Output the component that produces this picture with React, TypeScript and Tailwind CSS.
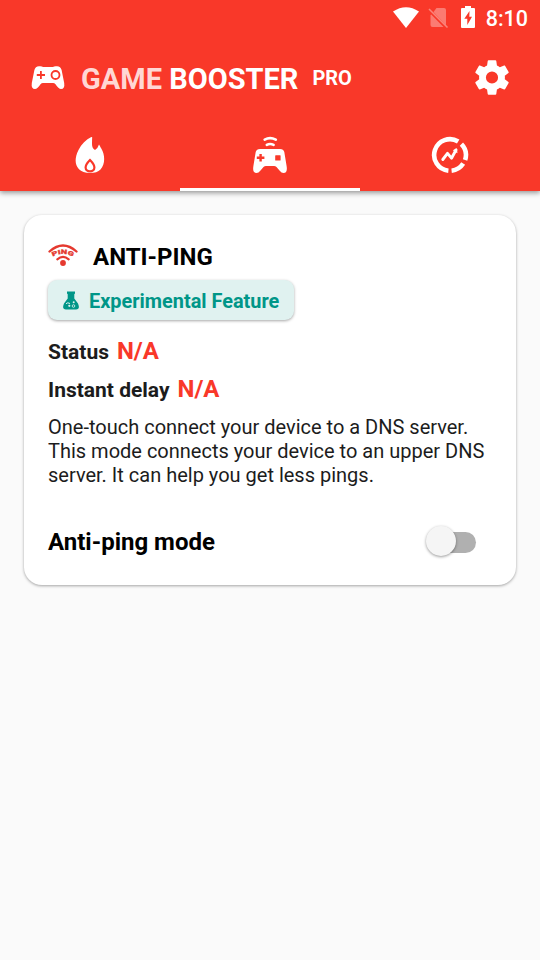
import type { ReactNode } from "react";

function StatusBar() {
  return (
    <div className="flex h-9 items-center justify-end pr-3">
      {/* wifi */}
      <svg className="mr-[8px] h-[22px] w-[28px]" viewBox="0 0 28 22" fill="#fff">
        <path d="M1 4.6Q14-4 27 4.6L14 21Z" />
      </svg>
      {/* no sim */}
      <svg className="mr-3 h-[22px] w-[21px]" viewBox="0 0 21 22">
        <path d="M8.5 1H16q2 0 2 2v15L5.5 5ZM3.2 7.5 15.5 20H4.5Q2.500 20 2.500 18V8Z" fill="#fff" opacity=".34" />
        <path d="M1 2 19.500 20.500" stroke="#fff" strokeWidth="1.600" opacity=".38" />
      </svg>
      {/* battery */}
      <svg className="mr-[11px] h-[22px] w-[14px] -translate-y-px" viewBox="0 0 14 22">
        <path d="M4 0H10V2H13Q14 2 14 3V21Q14 22 13 22H1Q0 22 0 21V3Q0 2 1 2H4Z" fill="#fff" />
        <path d="M8.500 5 3.300 12.800H6.300V19L11 10.800H8.300Z" fill="#f93829" />
      </svg>
      <span className="pt-[2px] text-[21.500px] font-medium leading-none text-white">8:10</span>
    </div>
  );
}

function GamepadIcon() {
  return (
    <svg className="h-[24px] w-[34px]" viewBox="0 0 34 24">
      <path
        d="M8 .3Q11 0 12 1H22Q23 0 26 .3Q29.700 .5 30.600 4L33.200 17Q34 23 30 23Q27.500 23 24.500 18.300Q23.500 17 22 17H12Q10.500 17 9.500 18.300Q6.500 23 4 23Q0 23 .8 17L3.400 4Q4.300 .5 8 .3Z"
        fill="#fff"
      />
      <path d="M5.800 9H14M9.900 5V13" stroke="#f93829" strokeWidth="1.800" />
      <circle cx="24.500" cy="9" r="4" fill="none" stroke="#f93829" strokeWidth="1.800" />
    </svg>
  );
}

function GearIcon() {
  return (
    <svg className="h-[43px] w-[43px] -translate-x-[0.5px]" viewBox="0 0 24 24" fill="#fff">
      <path d="M19.140 12.940c.04-.3.060-.61.060-.940 0-.32-.02-.640-.070-.940l2.030-1.580c.18-.14.230-.410.120-.610l-1.920-3.320c-.12-.22-.370-.290-.590-.220l-2.390.960c-.5-.380-1.030-.7-1.620-.940L14.400 2.810c-.04-.240-.240-.410-.480-.410h-3.840c-.240 0-.430.170-.470.410L9.250 5.350c-.59.240-1.130.570-1.620.940L5.240 5.330c-.22-.080-.470 0-.590.220L2.740 8.870c-.12.210-.080.470.120.610l2.030 1.580c-.05.3-.090.630-.090.940s.02.640.070.940l-2.030 1.580c-.18.140-.230.410-.120.610l1.920 3.320c.120.220.370.290.590.220l2.390-.960c.5.380 1.030.7 1.620.940l.360 2.540c.05.240.240.410.480.410h3.840c.240 0 .440-.170.470-.410l.360-2.540c.59-.240 1.130-.560 1.620-.940l2.390.960c.220.080.470 0 .590-.220l1.920-3.320c.120-.220.070-.470-.120-.610l-2.010-1.580zM12 15.400a3.400 3.400 0 1 1 0-6.800 3.400 3.400 0 0 1 0 6.800z" />
    </svg>
  );
}

function FlameIcon() {
  return (
    <svg className="h-[38px] w-[30px]" viewBox="0 0 30 38">
      <path
        d="M16.300 1C11 3.500 6.500 8 3.500 14C-.5 22 -.3 29 4 33.300Q7.500 37 15 37Q22 37 25.500 33.500C30.300 28.500 30.200 19 26.300 12.500C25.500 11 24.500 9.500 24 8.500Q23 12 20 14Q17 12.500 17 8Q17 4 17.200 1.300Z"
        fill="#fff"
      />
      <path
        d="M15 24C12.500 26.500 10.600 28.700 10.600 31.500C10.600 36.600 19.400 36.600 19.400 31.500C19.400 28.700 17.500 26.500 15 24Z"
        fill="#fff"
        stroke="#f93829"
        strokeWidth="2.200"
      />
    </svg>
  );
}

function RemoteIcon() {
  return (
    <svg className="h-[38px] w-[36px]" viewBox="0 0 36 38">
      <path
        d="M8 13H28Q31.500 13 32.300 16L34.600 30Q35.800 37 31.500 37Q29.500 37 27.500 34.500L24.500 31Q23.500 30 22 30H14Q12.500 30 11.500 31L8.500 34.500Q6.500 37 4.500 37Q.2 37 1.400 30L3.700 16Q4.500 13 8 13Z"
        fill="#fff"
      />
      <path d="M4.800 21.800H12.400M8.600 18V25.600" stroke="#f93829" strokeWidth="2.400" />
      <rect x="23.200" y="19.200" width="5.400" height="5.400" rx=".6" fill="#f93829" />
      <g fill="none" stroke="#fff" strokeWidth="2.600" strokeLinecap="round">
        <path d="M12.700 3.600Q18 .7 23.800 3.600" />
        <path d="M14.800 8.900Q18 7.100 21.600 8.900" />
      </g>
    </svg>
  );
}

function MeterIcon() {
  return (
    <svg className="h-[38px] w-[38px]" viewBox="0 0 38 38" fill="none" stroke="#fff">
      <path d="M17.400 34.700A15.800 15.800 0 1 1 27.200 5.500" strokeWidth="4.600" />
      <path d="M30.400 8.100A15.800 15.800 0 0 1 34.100 24M32.200 27.600A15.800 15.800 0 0 1 20.600 34.700" strokeWidth="4.600" />
      <path d="M11.800 23.500 16.500 17.300 20.500 22.200 25 14" strokeWidth="2.900" strokeLinecap="round" strokeLinejoin="round" />
      <path d="m21.800 14.300 4.200-2 .4 5Z" fill="#fff" stroke="none" />
    </svg>
  );
}

function PingIcon() {
  return (
    <svg className="h-[24px] w-[30px] -translate-y-px" viewBox="0 0 30 24" fill="none" stroke="#e5392f">
      <path d="M1.500 7.500Q15-4.400 28.500 7.500" strokeWidth="2.300" strokeLinecap="round" />
      <path id="ping-arc" d="M4.800 12.800Q15 7 25.200 12.800" stroke="none" />
      <text className="font-['Roboto'] text-[6px] font-black" fill="#e5392f" stroke="#e5392f" strokeWidth=".3">
        <textPath href="#ping-arc" textLength="21" lengthAdjust="spacingAndGlyphs">
          PING
        </textPath>
      </text>
      <path d="M9.300 15.400Q15 10.400 20.700 15.400" strokeWidth="2.100" strokeLinecap="round" />
      <circle cx="15" cy="19" r="2.900" fill="#e5392f" stroke="none" />
    </svg>
  );
}

function FlaskIcon() {
  return (
    <svg className="h-[19px] w-[16px]" viewBox="0 0 16 19">
      <path
        d="M4 .5H12V2.500L11.300 3.300V7.500L15 12.500Q17.500 18.500 13 18.500H3Q-1.500 18.500 1 12.500L4.700 7.500V3.300L4 2.500Z"
        fill="#009688"
      />
      <path d="M3 12.700Q4.500 11 7 12.500" stroke="#e0f2f0" fill="none" />
      <circle cx="6.300" cy="14.800" r="1.100" fill="#e0f2f0" />
      <circle cx="10.500" cy="15" r="1.300" fill="none" stroke="#e0f2f0" strokeWidth=".8" />
      <circle cx="10.700" cy="11.300" r="1" fill="#e0f2f0" />
    </svg>
  );
}

function Tab({ active, children }: { active?: boolean; children: ReactNode }) {
  return (
    <button
      className={
        active
          ? "flex flex-1 items-center justify-center border-y-[3px] border-t-transparent border-b-white"
          : "flex flex-1 items-center justify-center"
      }
    >
      {children}
    </button>
  );
}

function Stat({ label, value }: { label: string; value: string }) {
  return (
    <div className="flex h-[38px] items-baseline leading-[38px]">
      <span className="text-[21px] font-bold text-[#1c1c1c]">{label}</span>
      <span className="ml-2 text-[24px] font-bold text-[#f93829]">{value}</span>
    </div>
  );
}

export default function App() {
  return (
    <div className="flex min-h-[960px] w-[540px] flex-col bg-[#fafafa] font-['Roboto',sans-serif]">
      <header className="flex h-[191px] flex-col bg-[#f93829] shadow-[0_2px_5px_rgba(0,0,0,0.4)]">
        <StatusBar />
        <div className="flex h-[83px] items-center pr-[26px] pl-[31px]">
          <GamepadIcon />
          <h1 className="ml-4 pt-[5px] text-[29px] font-bold text-white">
            <span className="text-[#ffd7d4]">GAME</span> BOOSTER
          </h1>
          <span className="ml-[14px] pt-px text-[20px] font-bold text-white">PRO</span>
          <button className="ml-auto">
            <GearIcon />
          </button>
        </div>
        <nav className="flex h-[72px]">
          <Tab>
            <FlameIcon />
          </Tab>
          <Tab active>
            <RemoteIcon />
          </Tab>
          <Tab>
            <MeterIcon />
          </Tab>
        </nav>
      </header>

      <main className="mx-6 mt-6 h-[370px] rounded-[18px] bg-white px-6 pt-6 shadow-[0_1px_3px_rgba(0,0,0,0.35)]">
        <div className="flex h-[36px] items-center">
          <PingIcon />
          <h2 className="ml-[15px] text-[24px] font-bold text-black">ANTI-PING</h2>
        </div>

        <div className="mt-[5px] flex h-[40px] w-[246px] items-center rounded-[9px] bg-[#e0f2f0] pl-[15px] shadow-[0_1px_3px_rgba(0,0,0,0.35)]">
          <FlaskIcon />
          <span className="ml-[10px] pt-[3px] text-[19.900px] font-bold text-[#009688]">Experimental Feature</span>
        </div>

        <div className="mt-3">
          <Stat label="Status" value="N/A" />
          <Stat label="Instant delay" value="N/A" />
        </div>

        <p className="mt-[7px] text-[20px] leading-6 whitespace-nowrap text-[#1c1c1c]">
          One-touch connect your device to a DNS server.
          <br />
          This mode connects your device to an upper DNS
          <br />
          server. It can help you get less pings.
        </p>

        <div className="mt-[37px] flex h-[36px] items-center justify-between pr-4">
          <span className="text-[24px] font-bold text-black">Anti-ping mode</span>
          <button className="flex h-[21px] w-[48px] items-center rounded-full bg-[#b0b0b0]">
            <span className="mb-[2px] -ml-[2px] h-[30px] w-[30px] shrink-0 rounded-full bg-[#f5f5f5] shadow-[0_1px_3px_rgba(0,0,0,0.4)]" />
          </button>
        </div>
      </main>
    </div>
  );
}
